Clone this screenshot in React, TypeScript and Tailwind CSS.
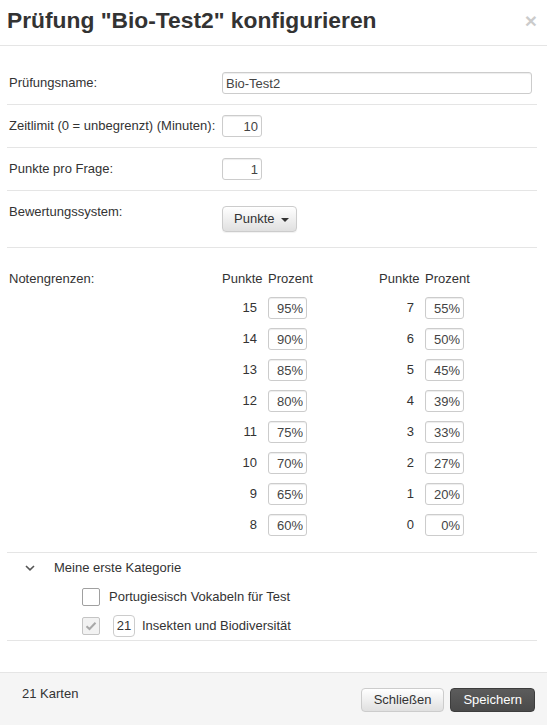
import React from "react";

const left = [
  [15, "95%"],
  [14, "90%"],
  [13, "85%"],
  [12, "80%"],
  [11, "75%"],
  [10, "70%"],
  [9, "65%"],
  [8, "60%"],
];

const right = [
  [7, "55%"],
  [6, "50%"],
  [5, "45%"],
  [4, "39%"],
  [3, "33%"],
  [2, "27%"],
  [1, "20%"],
  [0, "0%"],
];

const inputCls =
  "h-[22px] border border-[#ccc] rounded-[3px] px-[3px] text-[13px] text-[#444] bg-white outline-none shadow-[inset_0_1px_1px_rgba(0,0,0,0.075)]";

const GradeGroup = (props: any) => {
  return (
    <div className="w-[157px]">
      <div className="flex h-[18px] leading-[18px] whitespace-nowrap">
        <span className="w-[46px]">Punkte</span>
        <span>Prozent</span>
      </div>
      {props.rows.map((r: any) => (
        <div key={r[0]} className="flex items-center mt-[9px]">
          <span className="w-[46px] text-right pr-[11px] leading-[22px]">{r[0]}</span>
          <input readOnly value={r[1]} className={inputCls + " w-[39px] text-right"} />
        </div>
      ))}
    </div>
  );
};

const Caret = () => (
  <svg width="8" height="4" viewBox="0 0 8 4" className="ml-[7px] mt-[2px]">
    <path d="M0 0 L8 0 L4 4 Z" fill="#333" />
  </svg>
);

export default function App() {
  return (
    <div className="w-[547px] h-[725px] bg-white font-['Liberation_Sans',Arial,sans-serif] text-[13px] leading-[18px] text-[#333] flex flex-col">
      {/* header */}
      <div className="flex justify-between items-start pl-[7px] pr-[10px] pt-[8px] h-[46px] border-b border-[#e5e5e5]">
        <h4 className="text-[22.8px] leading-[25px] font-bold text-[#333]">
          Prüfung "Bio-Test2" konfigurieren
        </h4>
        <span className="text-[21px] leading-[21px] font-bold text-black opacity-20 mt-[2px]">×</span>
      </div>

      {/* body */}
      <div className="flex-1 pl-[7px] pr-[10px] pt-[16px]">
        <div className="flex items-center py-[10px] border-b border-[#e5e5e5]">
          <label className="w-[215px] pl-[2px]">Prüfungsname:</label>
          <input readOnly value="Bio-Test2" className={inputCls + " flex-1 mr-[5px]"} />
        </div>
        <div className="flex items-center py-[10px] border-b border-[#e5e5e5]">
          <label className="w-[215px] pl-[2px] whitespace-nowrap">Zeitlimit (0 = unbegrenzt) (Minuten):</label>
          <input readOnly value="10" className={inputCls + " w-[40px] text-right"} />
        </div>
        <div className="flex items-center py-[10px] border-b border-[#e5e5e5]">
          <label className="w-[215px] pl-[2px]">Punkte pro Frage:</label>
          <input readOnly value="1" className={inputCls + " w-[40px] text-right"} />
        </div>
        <div className="flex items-start pt-[12px] pb-[15px] border-b border-[#e5e5e5]">
          <label className="w-[215px] pl-[2px]">Bewertungssystem:</label>
          <button className="mt-[3px] h-[26px] flex items-center pl-[11px] pr-[7px] border border-[#ccc] rounded-[4px] bg-gradient-to-b from-white to-[#e0e0e0] shadow-[0_1px_1px_rgba(0,0,0,0.06)] text-[#333]">
            Punkte
            <Caret />
          </button>
        </div>
        <div className="flex items-start pt-[22px] pb-[16px] border-b border-[#e5e5e5]">
          <label className="w-[215px] pl-[2px]">Notengrenzen:</label>
          <GradeGroup rows={left} />
          <GradeGroup rows={right} />
        </div>
        <div className="border-b border-[#e5e5e5]">
          <div className="flex items-center h-[29px]">
            <svg width="10" height="6" viewBox="0 0 10 6" className="ml-[18px]">
              <path d="M1 1 L5 4.8 L9 1" fill="none" stroke="#555" strokeWidth="1.6" />
            </svg>
            <span className="ml-[19px]">Meine erste Kategorie</span>
          </div>
          <div className="flex items-center h-[29px] pl-[75px]">
            <span className="w-[18px] h-[18px] border border-[#a0a0a0] rounded-[2px] bg-white" />
            <span className="ml-[9px]">Portugiesisch Vokabeln für Test</span>
          </div>
          <div className="flex items-center h-[29px] pl-[75px]">
            <span className="w-[18px] h-[18px] border border-[#c4c4c4] rounded-[2px] bg-[#f2f2f2] flex items-center justify-center">
              <svg width="12" height="10" viewBox="0 0 12 10">
                <path d="M1.5 5.2 L4.5 8 L10.5 1.8" fill="none" stroke="#a8a8a8" strokeWidth="2" />
              </svg>
            </span>
            <span className="ml-[13px] w-[22px] h-[22px] border border-[#ccc] rounded-[4px] flex items-center justify-center">
              21
            </span>
            <span className="ml-[7px]">Insekten und Biodiversität</span>
          </div>
        </div>
      </div>

      {/* footer */}
      <div className="h-[53px] border-t border-[#e5e5e5] bg-[#f5f5f5] flex justify-between items-start pl-[22px] pr-[12px] pt-[12px]">
        <span>21 Karten</span>
        <div className="flex mt-[3px] gap-[6px]">
          <button className="h-[24px] px-[12px] border border-[#ccc] rounded-[4px] bg-gradient-to-b from-white to-[#e0e0e0] text-[#333]">
            Schließen
          </button>
          <button className="h-[24px] px-[12px] border border-[#3d3d3d] rounded-[4px] bg-gradient-to-b from-[#5c5c5c] to-[#4a4a4a] text-white">
            Speichern
          </button>
        </div>
      </div>
    </div>
  );
}
